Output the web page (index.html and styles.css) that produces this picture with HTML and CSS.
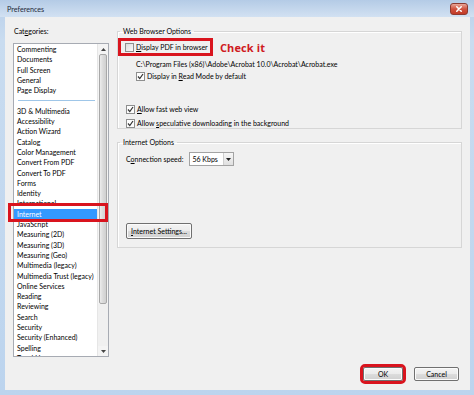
FILE: index.html
```html
<!DOCTYPE html>
<html>
<head>
<meta charset="utf-8">
<link rel="stylesheet" href="styles.css">
</head>
<body>
<div class="window">
  <div class="titlebar">
    <span class="title">Preferences</span>
    <span class="close"><svg width="18" height="12" viewBox="0 0 18 12"><path d="M6.5 3.5 L11.5 8.5 M11.5 3.5 L6.5 8.5" stroke="#fff" stroke-width="1.8" stroke-linecap="round"/></svg></span>
  </div>
  <div class="client">
    <div class="main">
      <div class="cats">
        <div class="lbl">Cat<u>e</u>gories:</div>
        <div class="listbox">
          <ul class="items">
            <li>Commenting</li>
            <li>Documents</li>
            <li>Full Screen</li>
            <li>General</li>
            <li>Page Display</li>
            <li class="sep"></li>
            <li>3D &amp; Multimedia</li>
            <li>Accessibility</li>
            <li>Action Wizard</li>
            <li>Catalog</li>
            <li>Color Management</li>
            <li>Convert From PDF</li>
            <li>Convert To PDF</li>
            <li>Forms</li>
            <li>Identity</li>
            <li>International</li>
            <li class="sel">Internet</li>
            <li>JavaScript</li>
            <li>Measuring (2D)</li>
            <li>Measuring (3D)</li>
            <li>Measuring (Geo)</li>
            <li>Multimedia (legacy)</li>
            <li>Multimedia Trust (legacy)</li>
            <li>Online Services</li>
            <li>Reading</li>
            <li>Reviewing</li>
            <li>Search</li>
            <li>Security</li>
            <li>Security (Enhanced)</li>
            <li>Spelling</li>
            <li>TouchUp</li>
          </ul>
          <div class="scrollbar">
            <div class="arrow"><svg width="5" height="3" viewBox="0 0 5 3"><path d="M0 3 L2.5 0 L5 3Z" fill="#444"/></svg></div>
            <div class="thumb"></div>
            <div class="track"></div>
            <div class="arrow"><svg width="5" height="3" viewBox="0 0 5 3"><path d="M0 0 L2.5 3 L5 0Z" fill="#444"/></svg></div>
          </div>
        </div>
        <div class="mark"></div>
      </div>
      <div class="panel">
        <fieldset class="group g1">
          <legend>Web Browser Options</legend>
          <div class="toprow">
            <div class="redbox">
              <span class="cb"></span><span><u>D</u>isplay PDF in browser</span>
            </div>
            <span class="checkit">Check it</span>
          </div>
          <div class="row path">C:\Program Files (x86)\Adobe\Acrobat 10.0\Acrobat\Acrobat.exe</div>
          <div class="row indent2"><span class="cb on"><svg width="7" height="7" viewBox="0 0 7 7"><path d="M1 3.5 L2.8 5.6 L6 1" fill="none" stroke="#333" stroke-width="1.2"/></svg></span><span>Display in <u>R</u>ead Mode by default</span></div>
          <div class="row indent1 fast"><span class="cb on"><svg width="7" height="7" viewBox="0 0 7 7"><path d="M1 3.5 L2.8 5.6 L6 1" fill="none" stroke="#333" stroke-width="1.2"/></svg></span><span><u>A</u>llow fast web view</span></div>
          <div class="row indent1 spec"><span class="cb on"><svg width="7" height="7" viewBox="0 0 7 7"><path d="M1 3.5 L2.8 5.6 L6 1" fill="none" stroke="#333" stroke-width="1.2"/></svg></span><span>Allow <u>s</u>peculative downloading in the background</span></div>
        </fieldset>
        <fieldset class="group g2">
          <legend>Internet Options</legend>
          <div class="conn">
            <span>C<u>o</u>nnection speed:</span>
            <div class="select"><span class="val">56 Kbps</span><span class="drop"><svg width="5" height="3" viewBox="0 0 5 3"><path d="M0 0 L2.5 3 L5 0Z" fill="#222"/></svg></span></div>
          </div>
          <button class="btn settings"><u>I</u>nternet Settings...</button>
        </fieldset>
      </div>
    </div>
    <div class="footer">
      <button class="btn ok">OK</button>
      <button class="btn cancel">Cancel</button>
    </div>
  </div>
</div>
</body>
</html>
```
FILE: styles.css
```css
* { box-sizing: border-box; }
html, body { margin: 0; padding: 0; }
body {
  width: 474px; height: 395px; overflow: hidden;
  font-family: Lato, "Open Sans", sans-serif;
  font-size: 7px; color: #000;
}
.window {
  width: 474px; height: 395px;
  background: linear-gradient(#b9cfe9, #c9dcf0 40px, #bcd4ee);
  display: flex; flex-direction: column;
}
.titlebar {
  height: 17px; display: flex; align-items: center; justify-content: space-between;
  padding: 0 6px 0 7px;
  background: linear-gradient(#b4cbe6, #d2e1f2);
}
.title { color: #1e2a3a; padding-top: 2px; font-size: 7.2px; }
.close {
  width: 18px; height: 12px; margin-top: 1px;
  border-radius: 3px; border: 1px solid #8d3a30;
  background: linear-gradient(#e9a89a, #d0523f 50%, #c23a26);
  display: flex; align-items: center; justify-content: center;
}
.close svg { display: block; }
.client {
  margin-left: 5px; width: 465px; height: 373px;
  background: #f0f0f0;
  display: flex; flex-direction: column;
}
.main { display: flex; gap: 8px; }
.cats { padding-left: 8px; width: 104px; position: relative; }
.lbl { line-height: 12px; margin-top: 8px; margin-bottom: 6px; padding-left: 1px; }
.listbox {
  width: 96px; height: 314px; border: 1px solid #a7abb3; background: #fff;
  display: flex; overflow: hidden;
}
.items { list-style: none; margin: 0; padding: 0; flex: 1; overflow: hidden; }
.items li { height: 10.3px; line-height: 10.3px; padding-left: 3px; white-space: nowrap; }
.items li.sep { position: relative; }
.items li.sep::after {
  content: ""; position: absolute; left: 4px; right: 2px; top: 5px; height: 1px; background: #9fc6e8;
}
.items li.sel { background: #3399ff; color: #fff; }
.mark {
  position: absolute; left: 3px; top: 186px; width: 100px; height: 19px;
  border: 3px solid #d9141e;
}
.scrollbar {
  width: 11px; border-left: 1px solid #e6e6e6; background: #f4f4f4;
  display: flex; flex-direction: column;
}
.arrow { height: 10px; display: flex; align-items: center; justify-content: center; }
.arrow svg { display: block; }
.thumb {
  height: 250px; margin: 0 1px;
  border: 1px solid #a8a8a8; border-radius: 2px;
  background: linear-gradient(90deg, #ececec, #dadada 50%, #d0d0d0);
}
.track { flex: 1; background: #f0f0f0; }
.panel { width: 345px; display: flex; flex-direction: column; }
.group {
  margin: 0; padding: 0; min-width: 0;
  border: 1px solid #d6d6d6; box-shadow: inset 1px 1px 0 #fff;
}
.group legend { padding: 0 3px; margin-left: 2px; line-height: 12px; }
.g1 { margin-top: 8px; height: 104px; }
.g2 { margin-top: 7px; height: 112px; }
.toprow { display: flex; align-items: center; margin-top: 1px; height: 18px; }
.redbox {
  width: 95px; height: 18px; border: 3px solid #d9141e;
  display: flex; align-items: center; gap: 2px; padding-left: 4px; white-space: nowrap;
}
.checkit {
  margin-left: 7px; color: #cf1a22; font-weight: bold; font-size: 11px;
  font-family: "Open Sans", sans-serif; letter-spacing: 0.1px;
}
.cb {
  width: 9px; height: 9px; border: 1px solid #8e8f8f;
  background: linear-gradient(135deg, #dcdcdc, #fafafa);
  display: inline-flex; align-items: center; justify-content: center; flex: none;
}
.cb.on { background: #fdfdfd; }
.cb svg { display: block; }
.row { display: flex; align-items: center; gap: 2px; height: 12px; line-height: 12px; white-space: nowrap; }
.path { margin-top: 2px; padding-left: 18px; }
.indent2 { padding-left: 18px; }
.indent1 { padding-left: 8px; }
.fast { margin-top: 21px; }
.spec { margin-top: 2px; }
.conn { display: flex; align-items: center; padding-left: 8px; margin-top: 4px; height: 14px; white-space: nowrap; }
.select {
  margin-left: 6px; width: 45px; height: 14px; border: 1px solid #a3a3a3; background: #fff;
  display: flex;
}
.select .val { flex: 1; padding-left: 2px; line-height: 12px; }
.select .drop {
  width: 10px; border-left: 1px solid #cfcfcf;
  background: linear-gradient(#f6f6f6, #e0e0e0);
  display: flex; align-items: center; justify-content: center;
}
.btn {
  font-family: inherit; font-size: inherit; color: #000;
  border: 1px solid #707070; border-radius: 2px;
  background: linear-gradient(#f4f4f4, #ebebeb 50%, #dcdcdc 51%, #d0d0d0);
  padding: 0; height: 14px; line-height: 12px; white-space: nowrap;
  box-shadow: inset 0 0 0 1px #fbfbfb;
}
.settings { margin-top: 57px; margin-left: 8px; width: 66px; height: 16px; }
.footer {
  margin-top: auto; display: flex; justify-content: flex-end; gap: 11px;
  padding: 0 11px 9px 0;
}
.ok { width: 40px; outline: 3px solid #d9141e; outline-offset: 0px; }
.cancel { width: 45px; }
```
